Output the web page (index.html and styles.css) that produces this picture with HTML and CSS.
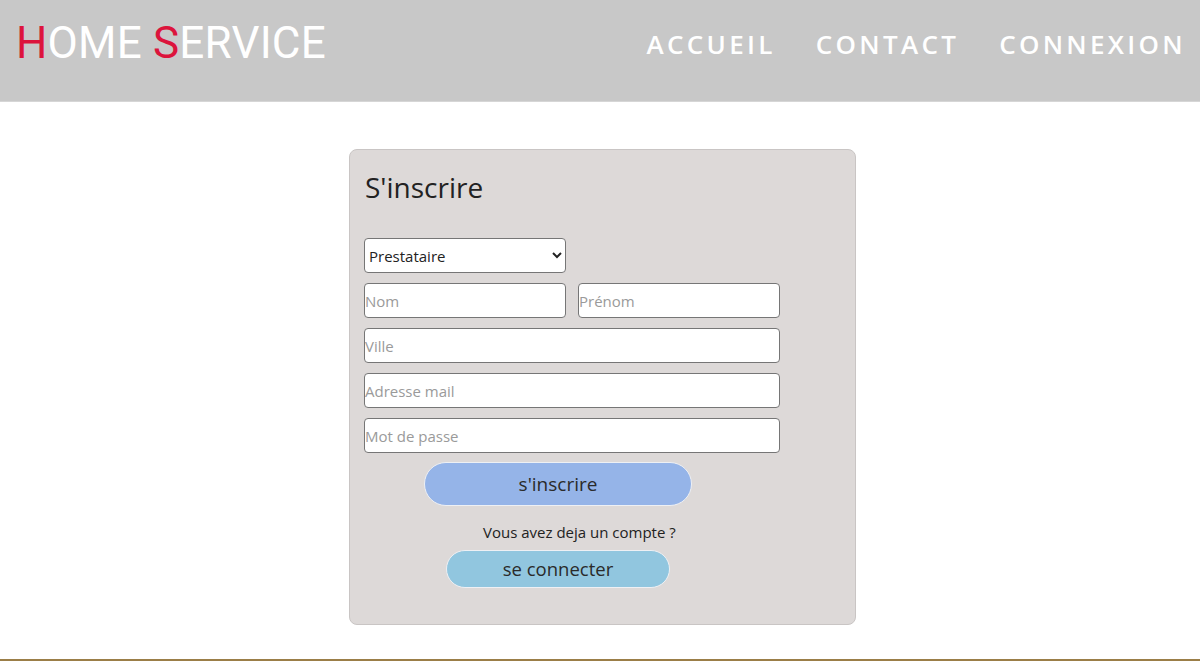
FILE: index.html
```html
<!DOCTYPE html>
<html lang="fr">
<head>
<meta charset="utf-8">
<title>Home Service - S'inscrire</title>
<link rel="stylesheet" href="styles.css">
</head>
<body>
<header class="topbar">
  <div class="logo"><span class="accent">H</span>OME <span class="accent">S</span>ERVICE</div>
  <nav class="nav">
    <a href="#">Accueil</a>
    <a href="#">Contact</a>
    <a href="#">Connexion</a>
  </nav>
</header>
<main class="main">
  <section class="card">
    <h1 class="title">S'inscrire</h1>
    <form class="form">
      <select class="field select">
        <option>Prestataire</option>
        <option>Client</option>
      </select>
      <div class="row">
        <input class="field half" type="text" placeholder="Nom">
        <input class="field half" type="text" placeholder="Prénom">
      </div>
      <input class="field full" type="text" placeholder="Ville">
      <input class="field full" type="email" placeholder="Adresse mail">
      <input class="field full" type="password" placeholder="Mot de passe">
      <button type="button" class="btn btn-signup">s'inscrire</button>
      <p class="already">Vous avez deja un compte ?</p>
      <button type="button" class="btn btn-login">se connecter</button>
    </form>
  </section>
</main>
<footer class="footer"></footer>
</body>
</html>
```
FILE: styles.css
```css
* { box-sizing: border-box; }
html, body { margin: 0; padding: 0; }
body {
  font-family: "Open Sans", "Liberation Sans", sans-serif;
  background: #fff;
  color: #222;
}
.topbar {
  height: 102px;
  background: #c8c8c8;
  display: flex;
  align-items: flex-start;
  justify-content: space-between;
  border-bottom: 1px solid #d6d6d6;
}
.logo {
  font-family: Roboto, "Liberation Sans", sans-serif;
  font-size: 44px;
  color: #fff;
  line-height: 1;
  margin: 21px 0 0 16px;
  letter-spacing: 0.2px;
}
.accent { color: #dc143c; }
.nav {
  display: flex;
  gap: 40px;
  margin: 26px 14px 0 0;
}
.nav a {
  color: #fff;
  text-decoration: none;
  text-transform: uppercase;
  font-size: 26px;
  font-weight: 600;
  letter-spacing: 3.3px;
  line-height: 36px;
}
.main {
  height: 557px;
  padding-top: 47px;
  display: flex;
  justify-content: center;
}
.card {
  width: 507px;
  height: 476px;
  margin-left: 5px;
  background: #ddd9d8;
  border: 1px solid #c9c5c4;
  border-radius: 8px;
  padding: 18px 15px 0 14px;
}
.title {
  margin: 0 0 0 1px;
  font-weight: 400;
  font-size: 28px;
  line-height: 38px;
  color: #222;
}
.form {
  display: flex;
  flex-direction: column;
  align-items: flex-start;
  margin-top: 32px;
}
.field {
  height: 35px;
  border: 1px solid #767676;
  border-radius: 4px;
  background: #fff;
  font-family: "Open Sans", "Liberation Sans", sans-serif;
  font-size: 15px;
  padding: 0;
  color: #222;
  margin: 0 0 10px 0;
}
.field::placeholder { color: #9a9a9a; }
.select {
  width: 202px;
  padding: 0;
}
.row {
  display: flex;
  gap: 12px;
}
.half { width: 202px; }
.full { width: 416px; }
.btn {
  font-family: "Open Sans", "Liberation Sans", sans-serif;
  color: #2a2a2a;
  border: 1px solid #eef0f4;
  cursor: pointer;
}
.btn-signup {
  margin: -1px 0 0 60px;
  width: 268px;
  height: 44px;
  border-radius: 22px;
  background: #95b4e8;
  font-size: 19px;
}
.already {
  margin: 16px 0 0 119px;
  font-size: 15px;
  line-height: 20px;
  color: #222;
}
.btn-login {
  margin: 8px 0 0 82px;
  width: 224px;
  height: 38px;
  border-radius: 19px;
  background: #91c6df;
  font-size: 18.5px;
  line-height: 1;
}
.footer {
  height: 2px;
  background: #9b7e48;
}
```
